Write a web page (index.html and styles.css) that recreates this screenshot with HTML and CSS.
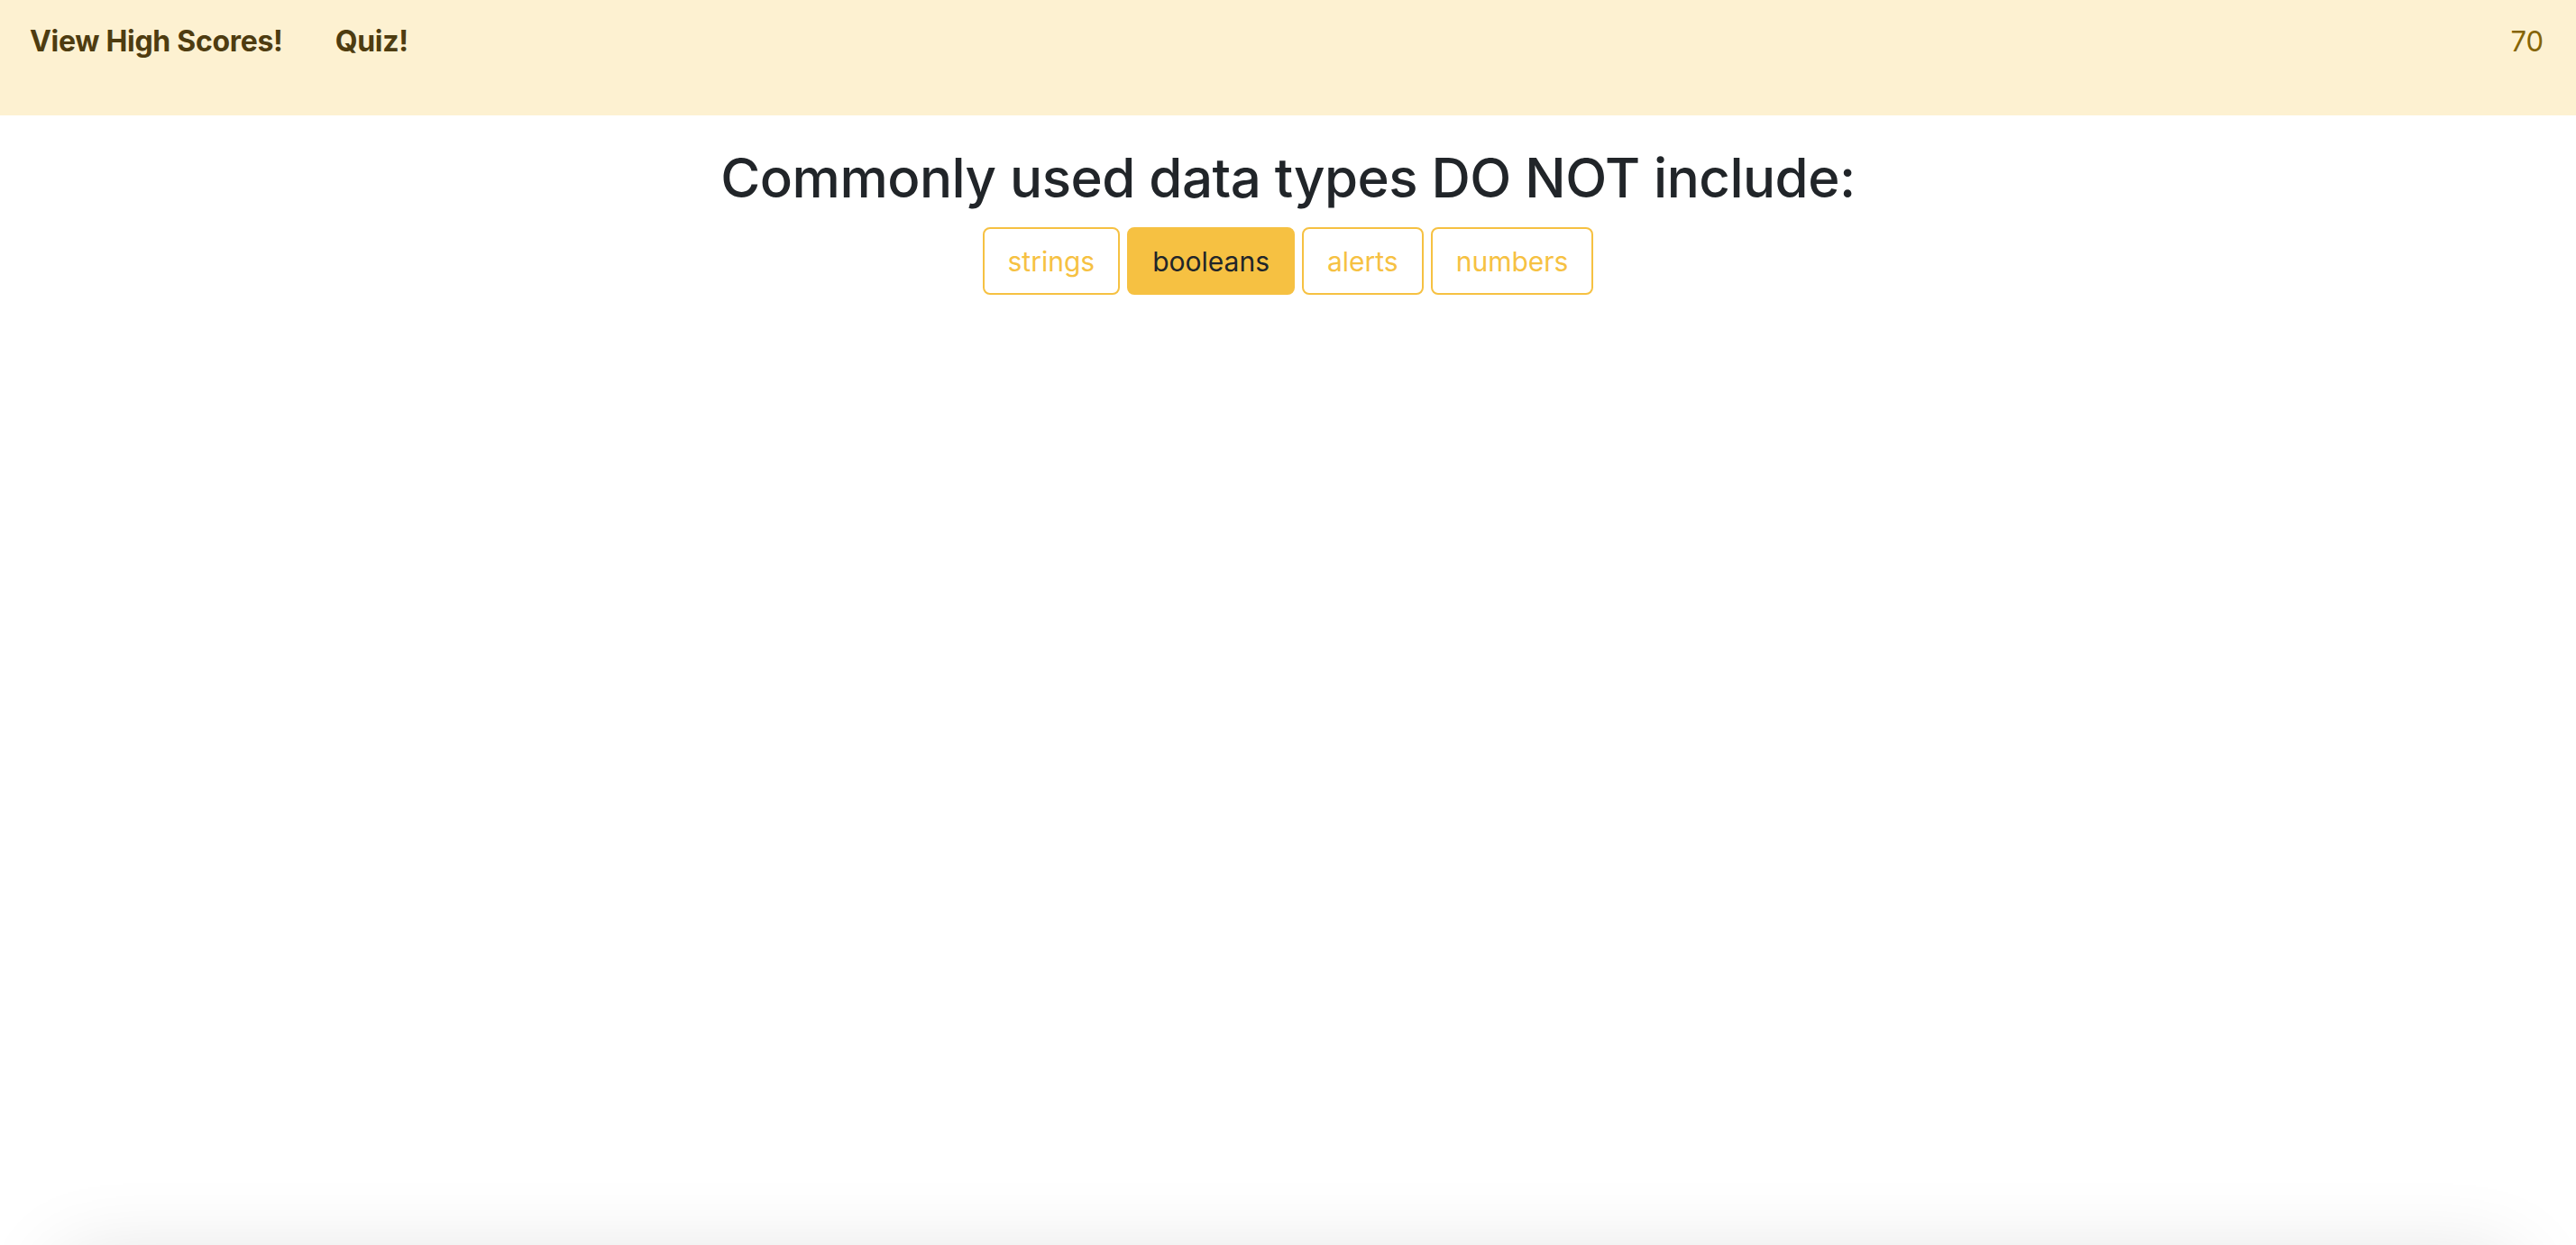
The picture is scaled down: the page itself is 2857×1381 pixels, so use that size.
FILE: index.html
```html
<!DOCTYPE html>
<html lang="en">
<head>
<meta charset="utf-8">
<title>Quiz</title>
<link rel="stylesheet" href="styles.css">
</head>
<body>
<div class="page">
  <nav class="navbar">
    <div class="nav-links">
      <a class="nav-brand" href="#">View High Scores!</a>
      <a class="nav-brand" href="#">Quiz!</a>
    </div>
    <span class="score">70</span>
  </nav>
  <main class="quiz">
    <h2 class="question">Commonly used data types DO NOT include:</h2>
    <div class="answers">
      <button class="answer">strings</button>
      <button class="answer answer-active">booleans</button>
      <button class="answer">alerts</button>
      <button class="answer">numbers</button>
    </div>
  </main>
</div>
<div class="panel"></div>
</body>
</html>
```

FILE: styles.css
```css
html, body {
  margin: 0;
  padding: 0;
  background: #ffffff;
  font-family: Inter, "Noto Sans", "Liberation Sans", sans-serif;
  overflow: hidden;
}

.page {
  min-height: 1400px;
}

.navbar {
  height: 128px;
  box-sizing: border-box;
  background: #fdf1d1;
  display: flex;
  justify-content: space-between;
  align-items: flex-start;
  padding: 22px 36px 0 33px;
}

.nav-links {
  display: flex;
  gap: 58px;
}

.nav-brand {
  color: #4e3c10;
  font-weight: 700;
  font-size: 32px;
  line-height: 48px;
  text-decoration: none;
  letter-spacing: -0.3px;
}

.score {
  color: #856404;
  font-size: 31px;
  line-height: 48px;
}

.quiz {
  display: flex;
  flex-direction: column;
  align-items: center;
}

.question {
  margin: 31px 0 0;
  font-size: 60px;
  font-weight: 500;
  line-height: 76px;
  color: #212529;
  letter-spacing: -0.5px;
}

.answers {
  display: flex;
  gap: 8px;
  margin-top: 17px;
}

.answer {
  height: 75px;
  box-sizing: border-box;
  padding: 0 26px;
  font-family: Inter, "Noto Sans", "Liberation Sans", sans-serif;
  font-size: 30px;
  font-weight: 400;
  color: #f6c142;
  background: #ffffff;
  border: 2px solid #f6c142;
  border-radius: 8px;
  cursor: pointer;
}

.answer-active {
  background: #f6c142;
  color: #212529;
}

.panel {
  margin: 0 70px;
  height: 400px;
  background: #ffffff;
  box-shadow: 0 0 90px rgba(0, 0, 0, 0.14);
}
```
